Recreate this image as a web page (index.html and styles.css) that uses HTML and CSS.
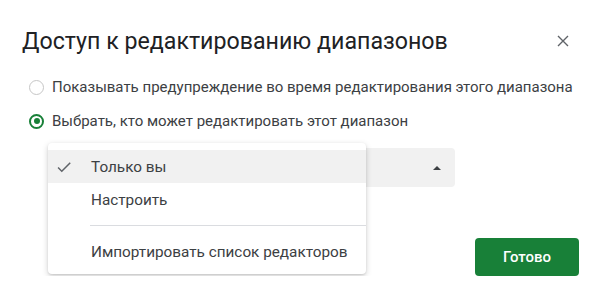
FILE: index.html
```html
<!DOCTYPE html>
<html lang="ru">
<head>
    <meta charset="UTF-8">
    <meta name="viewport" content="width=device-width, initial-scale=1.0">
    <title>Доступ к редактированию диапазонов</title>
    <link rel="stylesheet" href="styles.css">
</head>
<body>
    <div class="dialog">
        <div class="dialog-header">
            <h1 class="dialog-title">Доступ к редактированию диапазонов</h1>
            <button type="button" class="close-btn" aria-label="Закрыть">
                <svg width="12" height="12" viewBox="0 0 12 12"><path d="M1 1L11 11M11 1L1 11" stroke="#5f6368" stroke-width="1.4" fill="none"/></svg>
            </button>
        </div>
        <div class="options">
            <label class="radio-row"><span class="radio"></span>Показывать предупреждение во время редактирования этого диапазона</label>
            <label class="radio-row"><span class="radio checked"></span>Выбрать, кто может редактировать этот диапазон</label>
        </div>
        <div class="picker">
            <div class="select-box"><span class="arrow"></span></div>
            <div class="menu">
                <div class="menu-item selected">
                    <svg class="check" width="18" height="18" viewBox="0 0 24 24"><path d="M9 16.2L4.8 12l-1.4 1.4L9 19 21 7l-1.4-1.4z" fill="#5f6368"/></svg>
                    Только вы
                </div>
                <div class="menu-item">Настроить</div>
                <div class="menu-divider"></div>
                <div class="menu-item">Импортировать список редакторов</div>
            </div>
        </div>
        <div class="dialog-footer">
            <button type="button" class="done-btn">Готово</button>
        </div>
    </div>
</body>
</html>
```

FILE: styles.css
```css
body { margin: 0; background: #fff; font-family: Roboto, "Noto Sans", Arial, sans-serif; color: #3c4043; }
.dialog { padding: 27px 21px 0 22px; }
.dialog-header { display: flex; justify-content: space-between; align-items: center; height: 28px; }
.dialog-title { margin: 0; font-size: 23.2px; font-weight: 400; color: #202124; line-height: 28px; }
.close-btn { background: none; border: none; padding: 0; margin-right: 10px; width: 12px; height: 12px; display: flex; }
.options { margin-top: 15px; }
.radio-row { display: flex; align-items: center; height: 34px; font-size: 15px; color: #3c4043; }
.radio { width: 15px; height: 15px; border: 1px solid #c6c6c6; border-radius: 50%; margin: 0 8px 0 7px; box-sizing: border-box; flex-shrink: 0; }
.radio.checked { border: 2px solid #188038; position: relative; }
.radio.checked::after { content: ""; position: absolute; left: 2.5px; top: 2.5px; width: 6px; height: 6px; border-radius: 50%; background: #188038; }
.picker { position: relative; margin-top: 10px; padding-left: 32px; }
.select-box { width: 401px; height: 39px; background: #f1f1f1; border-radius: 4px; display: flex; align-items: center; justify-content: flex-end; }
.arrow { width: 0; height: 0; border-left: 4px solid transparent; border-right: 4px solid transparent; border-bottom: 4px solid #3c4043; margin-right: 14px; }
.menu { position: absolute; left: 26px; top: -5px; width: 318px; padding: 7px 0 5px; background: #fff; border-radius: 4px; box-shadow: 0 2px 6px rgba(0,0,0,0.18), 0 1px 2px rgba(0,0,0,0.1); }
.menu-item { position: relative; height: 34px; display: flex; align-items: center; padding-left: 43px; font-size: 15.3px; color: #3c4043; }
.menu-item.selected { background: #f1f1f1; height: 33px; }
.check { position: absolute; left: 7px; top: 8px; }
.menu-divider { height: 1px; background: #dadce0; margin: 8px 0 9px 42px; }
.dialog-footer { display: flex; justify-content: flex-end; margin-top: 51px; }
.done-btn { width: 104px; height: 38px; background: #188038; color: #fff; border: none; border-radius: 4px; font-family: Roboto, Arial, sans-serif; font-size: 15px; font-weight: 500; }
```
